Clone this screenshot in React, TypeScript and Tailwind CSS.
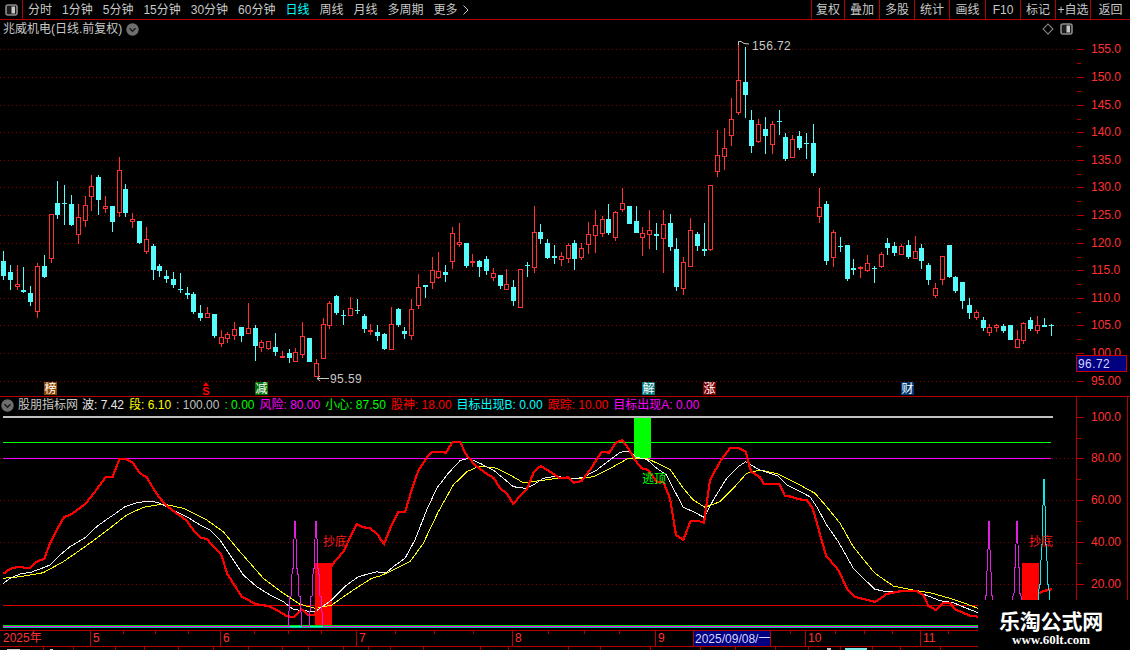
const FONT = { fontFamily: '"Liberation Sans","Noto Sans CJK SC",sans-serif' };

type Candle = [number, number, number, number, number, "r" | "c"];

// candle rows are [x, high, bodyTop, bodyBottom, low, kind], read off 3x crops
const seg1: Candle[] = [
  [10,333,363,408,420,"c"],[31,375,396,420,450,"c"],[52,375,432,438,450,"r"],[70,381,450,456,460,"c"],[91,438,459,486,498,"c"],
  [112,369,378,513,534,"r"],[133,345,378,411,414,"c"],[154,222,222,354,369,"r"],[172,123,189,225,237,"c"],[193,135,188,192,255,"c"],
  [214,165,192,255,258,"c"],[235,192,231,282,312,"r"],[256,168,195,240,261,"r"],[274,105,138,168,213,"r"],[295,105,111,180,225,"c"],
  [316,168,198,204,219,"r"],[337,198,198,246,276,"c"],[358,51,90,216,231,"r"],[376,132,147,219,231,"c"],[397,219,237,243,264,"r"],
  [418,243,243,309,312,"c"],[439,261,297,333,342,"r"],[460,312,318,390,420,"c"],[478,372,378,393,411,"c"],[499,390,408,417,429,"c"],
  [520,396,417,435,444,"c"],[541,399,447,451,459,"c"],[562,441,459,465,477,"c"],[580,456,462,516,522,"c"],[601,495,519,534,543,"c"],
  [622,501,519,531,531,"r"],[643,522,522,588,594,"c"],[664,570,591,609,621,"r"],[682,576,582,594,609,"r"],[703,546,567,585,600,"r"],
  [724,561,561,588,606,"c"],[745,489,564,579,579,"r"],[766,555,564,618,663,"c"],[784,600,606,621,636,"r"],[805,603,603,624,630,"r"],
  [826,579,621,636,648,"c"],[847,633,648,651,651,"r"],[868,627,639,654,669,"c"],[886,624,636,663,666,"r"],[907,546,588,642,654,"r"],
  [928,594,594,666,666,"c"],[949,657,669,708,708,"r"],[970,534,552,654,654,"r"],[988,483,489,555,567,"r"],[1009,465,468,519,525,"c"],
  [1030,510,525,528,555,"c"],[1051,471,504,525,528,"r"],[1072,477,510,513,522,"c"],
];
const seg2: Candle[] = [
  [13,522,528,567,579,"c"],[31,552,570,573,585,"r"],[52,555,576,588,603,"c"],[73,579,582,627,630,"c"],[94,501,552,627,627,"r"],
  [115,504,507,555,561,"c"],[133,561,573,582,597,"c"],[154,477,507,585,600,"r"],[175,402,441,495,507,"r"],[196,435,436,440,474,"c"],
  [217,351,390,426,447,"r"],[235,336,393,411,417,"r"],[256,375,396,405,426,"c"],[277,261,279,363,387,"r"],[298,249,306,312,321,"r"],
  [319,309,309,378,384,"c"],[337,342,363,366,381,"r"],[358,360,363,381,411,"c"],[379,348,357,393,405,"c"],[400,384,399,411,423,"r"],
  [421,405,405,438,447,"c"],[439,387,432,447,447,"r"],[460,420,441,483,498,"c"],[481,387,387,501,501,"r"],[502,366,375,379,411,"c"],
  [523,198,276,381,399,"r"],[541,252,276,297,312,"c"],[562,297,309,354,357,"c"],[583,315,348,354,372,"c"],[604,336,348,357,378,"r"],
  [625,309,315,354,369,"r"],[643,300,309,357,390,"c"],[664,309,324,351,360,"r"],[685,246,282,312,342,"r"],[706,210,255,285,339,"r"],
  [727,228,237,279,291,"r"],[745,192,237,279,285,"c"],[766,213,216,291,303,"r"],[787,144,189,207,216,"r"],[808,198,198,252,252,"c"],
  [829,198,243,279,279,"c"],[847,261,279,291,348,"r"],[868,210,270,282,327,"r"],[889,249,282,288,330,"c"],[910,210,252,294,399,"r"],
  [931,222,249,321,333,"c"],[949,294,327,441,453,"c"],[970,351,366,444,465,"r"],[991,234,270,378,378,"r"],[1012,276,282,318,333,"c"],
  [1033,249,327,333,348,"c"],[1051,135,135,327,333,"r"],
];
const seg3: Candle[] = [
  [52,300,375,423,441,"r"],[73,294,354,378,420,"r"],[94,204,267,315,348,"r"],[115,36,150,246,255,"r"],[136,51,156,195,264,"c"],
  [154,240,270,348,369,"c"],[175,267,282,333,339,"r"],[196,261,297,318,372,"c"],[217,273,282,342,372,"r"],[238,240,273,276,315,"c"],
  [256,309,321,387,393,"c"],[277,315,327,381,381,"r"],[298,303,318,354,360,"c"],[319,309,339,342,387,"c"],[340,282,339,429,438,"c"],
  [358,474,531,558,579,"r"],[379,513,522,693,705,"c"],[400,600,606,681,711,"r"],[421,621,648,651,666,"c"],[442,645,645,747,753,"c"],
  [460,687,714,720,735,"c"],[481,708,711,714,744,"r"],[502,675,699,720,726,"r"],[523,708,714,717,759,"c"],[544,666,672,708,714,"r"],
  [562,624,639,654,675,"c"],[583,636,648,669,678,"c"],[604,642,648,672,675,"r"],[625,630,645,681,687,"c"],[646,618,663,684,687,"r"],
  [664,642,654,693,717,"c"],[685,699,705,750,765,"c"],[706,759,774,795,804,"r"],[727,678,678,747,765,"r"],[748,645,645,741,744,"c"],
  [766,738,741,783,789,"c"],[787,756,756,813,837,"c"],[808,804,825,849,867,"c"],[829,840,846,861,870,"r"],[850,861,870,894,903,"c"],
  [868,882,891,906,918,"r"],[889,882,886,891,906,"r"],[910,882,888,903,909,"c"],[931,885,885,930,930,"c"],[952,900,927,951,954,"r"],
  [970,876,879,930,942,"r"],[991,861,870,897,903,"c"],[1012,858,885,900,912,"r"],[1033,864,885,891,891,"c"],[1054,882,884,886,918,"c"],
];

const toPage = (rows: Candle[], ox: number, oy: number) =>
  rows.map(([x, h, t, b, l, k]) => ({
    x: Math.round(ox + x / 3),
    h: Math.round(oy + h / 3),
    t: Math.round(oy + t / 3),
    b: Math.round(oy + b / 3),
    l: Math.round(oy + l / 3),
    k,
  }));

const candles = [...toPage(seg1, 0, 140), ...toPage(seg2, 360, 140), ...toPage(seg3, 700, 30)];

const line = (ox: number, oy: number, pts: number[][]) =>
  pts.map(([x, y]) => `${(ox + x / 3).toFixed(1)},${(oy + y / 3).toFixed(1)}`).join(" ");

const redCurve = [
  line(0, 420, [[10,462],[30,447],[55,440],[75,443],[92,443],[110,425],[133,416],[150,370],[170,330],[192,292],[215,282],[255,253],[285,215],[318,170],[338,170],[358,118],[378,118],[398,128],[420,160],[440,172],[460,205],[480,235],[500,258],[530,280],[560,302],[580,330],[600,352],[622,358],[640,380],[662,400],[672,430],[682,462],[700,490],[725,530],[745,540],[765,552],[805,558],[830,570],[860,588],[882,592],[905,568],[925,585],[945,585],[965,500],[1000,430],[1030,395],[1070,312],[1090,322],[1110,324],[1135,345]]),
  line(380, 420, [[0,355],[12,372],[35,315],[55,277],[75,277],[95,210],[115,152],[140,113],[158,95],[180,95],[198,98],[218,65],[240,65],[258,103],[285,135],[318,160],[342,175],[360,205],[380,220],[400,252],[420,228],[442,205],[462,155],[482,138],[510,155],[540,175],[565,172],[582,188],[605,183],[630,150],[665,95],[688,98],[708,68],[727,60],[745,85],[765,120],[785,145],[805,150],[830,185],[850,185],[870,235],[888,345],[910,360],[932,302],[952,302],[972,308],[990,180],[1020,125],[1050,85],[1075,83],[1097,95],[1113,155],[1135,168]]),
  line(760, 400, [[0,232],[12,252],[58,252],[75,288],[95,290],[115,298],[140,300],[158,325],[178,395],[198,467],[235,510],[262,568],[285,590],[310,597],[345,606],[380,582],[420,574],[470,574],[490,585],[505,617],[527,630],[550,608],[570,608],[585,628],[630,647],[654,650]]),
].join(" ");

const whiteCurve = [
  line(0, 420, [[10,490],[30,475],[60,462],[95,456],[130,443],[150,435],[180,405],[210,380],[255,353],[290,320],[320,298],[340,285],[375,260],[410,248],[450,243],[475,248],[510,265],[560,290],[600,315],[630,330],[660,360],[700,420],[730,465],[770,500],[810,525],[850,545],[880,568],[910,572],[945,575],[995,540],[1040,495],[1075,470],[1130,455]]),
  line(380, 420, [[0,457],[20,457],[40,440],[75,415],[105,360],[140,270],[170,205],[205,160],[240,122],[265,115],[300,130],[340,150],[370,175],[400,200],[435,205],[460,195],[490,175],[530,168],[570,178],[610,172],[650,150],[690,120],[720,97],[745,93],[770,112],[800,118],[830,145],[860,165],[885,215],[910,262],[940,275],[972,292],[1000,240],[1040,175],[1075,140],[1097,125],[1135,148]]),
  line(760, 400, [[0,210],[30,220],[55,228],[80,255],[110,270],[150,290],[170,320],[200,375],[235,425],[280,505],[310,535],[345,568],[380,575],[430,572],[470,575],[510,590],[540,602],[580,608],[620,625],[654,638]]),
].join(" ");

const yellowCurve = [
  line(0, 420, [[10,475],[60,470],[130,458],[190,425],[255,380],[310,340],[380,285],[430,262],[490,252],[550,265],[620,300],[670,335],[720,395],[790,475],[850,520],[900,553],[945,565],[995,555],[1060,510],[1115,475]]),
  line(380, 420, [[0,468],[40,450],[90,425],[130,370],[175,275],[220,195],[260,155],[300,138],[350,145],[390,165],[430,188],[480,182],[530,175],[600,176],[640,170],[700,140],[745,115],[800,115],[870,148],[910,205],[940,240],[975,262],[1020,245],[1060,205],[1100,160],[1140,150]]),
  line(760, 400, [[0,210],[55,222],[110,250],[165,280],[200,320],[240,370],[280,440],[320,490],[345,520],[400,558],[470,572],[510,578],[570,595],[620,612],[654,625]]),
].join(" ");

// stepped spike: cx and top in page px, half is half the base width
const spike = (cx: number, top: number, half: number, bottom: number) => {
  const h = bottom - top;
  const s = [
    [-1, 0.05], [-0.8, 0.28], [-0.62, 0.28], [-0.42, 0.55], [-0.3, 0.55], [-0.2, 0.78], [0, 1],
    [0.2, 0.78], [0.3, 0.55], [0.42, 0.55], [0.62, 0.28], [0.8, 0.28], [1, 0.05],
  ];
  return [[cx - half, bottom], ...s.map(([a, b]) => [cx + a * half, bottom - b * h]), [cx + half, bottom]]
    .map((p) => p.join(","))
    .join(" ");
};

const priceTicks = [
  { label: "155.0", y: 49 }, { label: "150.0", y: 77 }, { label: "145.0", y: 105 }, { label: "140.0", y: 132 },
  { label: "135.0", y: 160 }, { label: "130.0", y: 187 }, { label: "125.0", y: 215 }, { label: "120.0", y: 243 },
  { label: "115.0", y: 270 }, { label: "110.0", y: 298 }, { label: "105.0", y: 325 }, { label: "100.0", y: 353 },
  { label: "95.00", y: 381 },
];
const indicatorTicks = [
  { label: "100.0", y: 417 }, { label: "80.00", y: 458 }, { label: "60.00", y: 500 }, { label: "40.00", y: 542 }, { label: "20.00", y: 584 },
];

const leftTabs = ["分时", "1分钟", "5分钟", "15分钟", "30分钟", "60分钟", "日线", "周线", "月线", "多周期", "更多"];
const rightTabs = [
  { label: "复权", cls: "w-[33px]" }, { label: "叠加", cls: "w-[35px]" }, { label: "多股", cls: "w-[35px]" },
  { label: "统计", cls: "w-[35px]" }, { label: "画线", cls: "w-[36px]" }, { label: "F10", cls: "w-[35px]" },
  { label: "标记", cls: "w-[35px]" }, { label: "+自选", cls: "w-[35px]" }, { label: "返回", cls: "w-[40px]" },
];

const readouts = [
  { text: "波: 7.42", cls: "text-[#e8e8e8]" },
  { text: "段: 6.10", cls: "text-[#ffff00]" },
  { text: ": 100.00", cls: "text-[#c0c0c0]" },
  { text: ": 0.00", cls: "text-[#00ff00]" },
  { text: "风险: 80.00", cls: "text-[#ff00ff]" },
  { text: "小心: 87.50", cls: "text-[#00ff00]" },
  { text: "股神: 18.00", cls: "text-[#ff0000]" },
  { text: "目标出现B: 0.00", cls: "text-[#00ffff]" },
  { text: "跟踪: 10.00", cls: "text-[#ff0000]" },
  { text: "目标出现A: 0.00", cls: "text-[#ff00ff]" },
];

const badges = [
  { text: "榜", x: 44, cls: "bg-[#8b4500]" },
  { text: "减", x: 255, cls: "bg-[#007000]" },
  { text: "解", x: 642, cls: "bg-[#007878]" },
  { text: "涨", x: 703, cls: "bg-[#7d0000]" },
  { text: "财", x: 901, cls: "bg-[#003a78]" },
];

const topMarks = [123, 155, 188, 254, 288, 321, 395, 434, 473, 548, 584, 619, 708, 790, 835, 864, 892, 948, 985];
const bottomMarks = [43, 73, 115, 144, 178, 213, 248, 282, 308, 343, 368, 390, 423, 480, 508, 568, 600, 650, 700, 735, 775, 808, 840, 872, 900, 940];
const monthMarks = [
  { label: "5", x: 90 }, { label: "6", x: 220 }, { label: "7", x: 356 }, { label: "8", x: 512 },
  { label: "9", x: 655 }, { label: "10", x: 805 }, { label: "11", x: 920 },
];

const PanelIcon = () => (
  <svg width="13" height="12" viewBox="0 0 13 12">
    <rect x="1" y="1" width="11" height="10" rx="2" fill="#1c1c1c" stroke="#8c8c8c" strokeWidth="1.6" />
    <rect x="6.5" y="2.5" width="3.5" height="7" fill="#c8c8c8" />
  </svg>
);

const ChevronDot = () => (
  <svg width="13" height="13" viewBox="0 0 13 13">
    <circle cx="6.5" cy="6.5" r="6.2" fill="#6e6e6e" />
    <path d="M3.5 5.2 6.5 8.2 9.5 5.2" fill="none" stroke="#1a1a1a" strokeWidth="1.5" />
  </svg>
);

const Toolbar = () => (
  <div className="flex h-5 shrink-0 items-stretch border-b border-[#b40000] text-[12px] text-[#c8c8c8]">
    <div className="flex w-[23px] shrink-0 items-center justify-center border-r border-[#b40000]">
      <PanelIcon />
    </div>
    <div className="flex items-center">
      {leftTabs.map((t) => (
        <span key={t} className={t === "日线" ? "px-[5px] text-[#00ffff]" : "px-[5px]"}>
          {t}
        </span>
      ))}
      <svg width="6" height="10" viewBox="0 0 6 10">
        <path d="M0.5 0.5 5 5 0.5 9.5" fill="none" stroke="#c8c8c8" />
      </svg>
    </div>
    <div className="ml-auto flex">
      {rightTabs.map((t) => (
        <div key={t.label} className={`flex items-center justify-center border-l border-[#b40000] ${t.cls}`}>
          {t.label}
        </div>
      ))}
    </div>
  </div>
);

const Axis = ({ ticks, top, minor }: { ticks: { label: string; y: number }[]; top: number; minor: boolean }) => (
  <div className="relative w-[54px] shrink-0">
    <div className="flex h-full">
      <div className="relative w-[51px] border-l border-[#b40000]">
        {ticks.map((t, i) => (
          <div key={t.label}>
            <div className="absolute left-0 h-px w-[7px] bg-[#b40000]" style={{ top: t.y - top }} />
            {minor && i < ticks.length - 1 && (
              <div className="absolute left-0 h-px w-[4px] bg-[#b40000]" style={{ top: (t.y + ticks[i + 1].y) / 2 - top }} />
            )}
            <span className="absolute left-[14px] text-[12px] leading-[14px] text-[#ff3232]" style={{ top: t.y - top - 7 }}>
              {t.label}
            </span>
          </div>
        ))}
      </div>
      <div className="w-[3px] border-l border-[#b40000]" />
    </div>
  </div>
);

const PricePanel = () => (
  <div className="flex h-[377px] shrink-0 border-b border-[#b40000]">
    <div className="relative w-[1076px] shrink-0">
      <svg className="absolute inset-0" width="1076" height="376" viewBox="0 20 1076 376" shapeRendering="crispEdges">
        {priceTicks.map((t) => (
          <line key={t.y} x1="0" x2="1076" y1={t.y + 0.5} y2={t.y + 0.5} stroke="#8c0000" strokeDasharray="1 3" />
        ))}
        {candles.map((c, i) =>
          c.k === "r" ? (
            <g key={i} stroke="#ff3232" fill="#000">
              <line x1={c.x + 0.5} x2={c.x + 0.5} y1={c.h} y2={c.t} />
              <line x1={c.x + 0.5} x2={c.x + 0.5} y1={c.b} y2={c.l} />
              <rect x={c.x - 2 + 0.5} y={c.t + 0.5} width="4" height={Math.max(c.b - c.t, 1)} />
            </g>
          ) : (
            <g key={i} fill="#54fcfc">
              <rect x={c.x} y={c.h} width="1" height={c.l - c.h} />
              <rect x={c.x - 2} y={c.t} width="5" height={Math.max(c.b - c.t, 1)} />
            </g>
          ),
        )}
        <g shapeRendering="auto" fill="none" stroke="#c8c8c8">
          <path d="M738.5 45V41.5H741L744 43.5 749 44" />
          <path d="M317 378.5H329M317 378.5 320 376M317 378.5 320 381" />
        </g>
      </svg>
      <div className="absolute left-[3px] top-[2px] flex h-[14px] items-center gap-[4px] text-[12px] text-[#c8c8c8]">
        <span>兆威机电(日线.前复权)</span>
        <ChevronDot />
      </div>
      <div className="absolute left-[1044px] top-[5px] size-[8px] rotate-45 border border-[#8c8c8c]" />
      <div className="absolute left-[1060px] top-[3px]">
        <PanelIcon />
      </div>
      <span className="absolute left-[752px] top-[19px] text-[12px] leading-[14px] tracking-[0.4px] text-[#c8c8c8]">156.72</span>
      <span className="absolute left-[330px] top-[352px] text-[12px] leading-[14px] tracking-[0.4px] text-[#c8c8c8]">95.59</span>
      {badges.map((b) => (
        <span
          key={b.text}
          className={`absolute top-[362px] flex h-[13px] w-[13px] items-center justify-center text-[12px] leading-none text-white ${b.cls}`}
          style={{ left: b.x }}
        >
          {b.text}
        </span>
      ))}
      <span className="absolute left-[202px] top-[362px] flex w-[8px] flex-col items-center text-[11px] font-bold leading-[10px] text-[#ff0000]">
        <span className="size-0 border-x-[3px] border-b-[4px] border-x-transparent border-b-[#ff0000]" />
        S
      </span>
    </div>
    <div className="relative">
      <Axis ticks={priceTicks} top={20} minor />
      <div className="absolute left-0 top-[335px] flex h-[17px] w-[51px] items-center border border-[#c80000] bg-[#000080] pl-[1px] text-[12px] tracking-[0.4px] text-[#d4d4ff]">
        96.72
      </div>
    </div>
  </div>
);

const IndicatorPanel = () => (
  <div className="flex h-[233px] shrink-0">
    <div className="relative w-[1076px] shrink-0">
      <svg className="absolute inset-0" width="1076" height="233" viewBox="0 397 1076 233" shapeRendering="crispEdges">
        {[458, 500, 542, 584].map((y) => (
          <line key={y} x1="0" x2="1076" y1={y + 0.5} y2={y + 0.5} stroke="#8c0000" strokeDasharray="1 3" />
        ))}
        <rect x="3" y="416" width="1050" height="2" fill="#c0c0c0" />
        <rect x="3" y="442" width="1048" height="1" fill="#00ff00" />
        <rect x="3" y="458" width="1048" height="1" fill="#ff00ff" />
        <rect x="3" y="605" width="975" height="1" fill="#e00000" />
        <rect x="3" y="625" width="975" height="1" fill="#00e000" />
        <rect x="3" y="626" width="975" height="1" fill="#ff00ff" />
        <rect x="3" y="627" width="975" height="1" fill="#00c8a0" />
        <rect x="290" y="626" width="12" height="1" fill="#00ffc0" />
        <rect x="310" y="626" width="13" height="1" fill="#00ffc0" />
        <rect x="315" y="563" width="17" height="62" fill="#ff0000" />
        <rect x="1022" y="563" width="17" height="40" fill="#ff0000" />
        <rect x="634" y="418" width="17" height="40" fill="#00ff00" />
        <polyline points={yellowCurve} fill="none" stroke="#ffff00" strokeWidth="1" />
        <polyline points={whiteCurve} fill="none" stroke="#f0f0f0" strokeWidth="1" />
        <polyline points={redCurve} fill="none" stroke="#ff0000" strokeWidth="2.2" />
        <polyline points="1039,593 1044,591 1052,589" fill="none" stroke="#ff0000" strokeWidth="2.2" />
        <g fill="none" strokeWidth="1">
          <polyline points={spike(295, 521, 6.5, 626)} stroke="#e020e0" />
          <polyline points={spike(316, 521, 6.5, 626)} stroke="#e020e0" />
          <polyline points={spike(989, 521, 4.5, 625)} stroke="#e020e0" />
          <polyline points={spike(1017, 521, 5, 625)} stroke="#e020e0" />
          <polyline points={spike(1044, 479, 6, 625)} stroke="#00f0f0" />
        </g>
      </svg>
      <div className="absolute left-[1px] top-0 flex h-[16px] items-center whitespace-nowrap text-[12px]">
        <span className="mr-[4px] flex">
          <ChevronDot />
        </span>
        <span className="mr-[4px] text-[#c8c8c8]">股朋指标网</span>
        <span className="flex gap-[5px]">
          {readouts.map((r) => (
            <span key={r.text} className={r.cls}>
              {r.text}
            </span>
          ))}
        </span>
      </div>
      <span className="absolute left-[323px] top-[138px] text-[12px] leading-[14px] text-[#ff1a1a]">抄底</span>
      <span className="absolute left-[1029px] top-[138px] text-[12px] leading-[14px] text-[#ff1a1a]">抄底</span>
      <span className="absolute left-[642px] top-[75px] text-[12px] leading-[14px] text-[#00ff00]">逃顶</span>
    </div>
    <Axis ticks={indicatorTicks} top={397} minor />
  </div>
);

const DateAxis = () => (
  <div className="relative h-[20px] shrink-0 text-[12px] text-[#ff3232]">
    <div className="relative h-[17px] border-y border-[#b40000]">
      <span className="absolute left-[3px] top-0 leading-[15px]">2025年</span>
      {monthMarks.map((m) => (
        <span key={m.label} className="absolute top-0 h-[15px] border-l border-[#b40000] pl-[2px] leading-[15px]" style={{ left: m.x }}>
          {m.label}
        </span>
      ))}
      {topMarks.map((x) => (
        <span key={x} className="absolute top-0 h-[3px] w-px bg-[#b40000]" style={{ left: x }} />
      ))}
      <span className="absolute left-[693px] top-0 flex h-[15px] w-[78px] items-center whitespace-nowrap border-x border-[#b40000] bg-[#000080] pl-[1px] text-[#d4d4ff]">
        2025/09/08/一
      </span>
    </div>
    {bottomMarks.map((x) => (
      <span key={x} className="absolute top-[17px] h-[3px] w-px bg-[#b40000]" style={{ left: x }} />
    ))}
    <span className="absolute left-[7px] top-[19px] h-px w-[13px] bg-[#c8c8c8]" />
    <span className="absolute left-[50px] top-[19px] h-px w-[3px] bg-[#c8c8c8]" />
    <span className="absolute left-[827px] top-[18px] h-[2px] w-[4px] bg-[#c8c8c8]" />
    <span className="absolute left-[845px] top-[18px] h-[2px] w-[22px] bg-[#7fe8e8]" />
  </div>
);

const Watermark = () => (
  <div className="absolute bottom-0 right-0 flex h-[50px] w-[152px] flex-col items-center bg-black pr-[6px] pt-[9px] font-bold text-white">
    <span className="text-[21px] leading-[23px] tracking-[-0.2px]" style={{ fontFamily: '"Noto Sans CJK SC",serif' }}>
      乐淘公式网
    </span>
    <span className="text-[13px] leading-[16px]" style={{ fontFamily: '"Liberation Serif",serif' }}>
      www.60lt.com
    </span>
  </div>
);

export default function App() {
  return (
    <div className="relative flex h-[650px] w-[1130px] flex-col overflow-hidden bg-black" style={FONT}>
      <Toolbar />
      <PricePanel />
      <IndicatorPanel />
      <DateAxis />
      <Watermark />
    </div>
  );
}
